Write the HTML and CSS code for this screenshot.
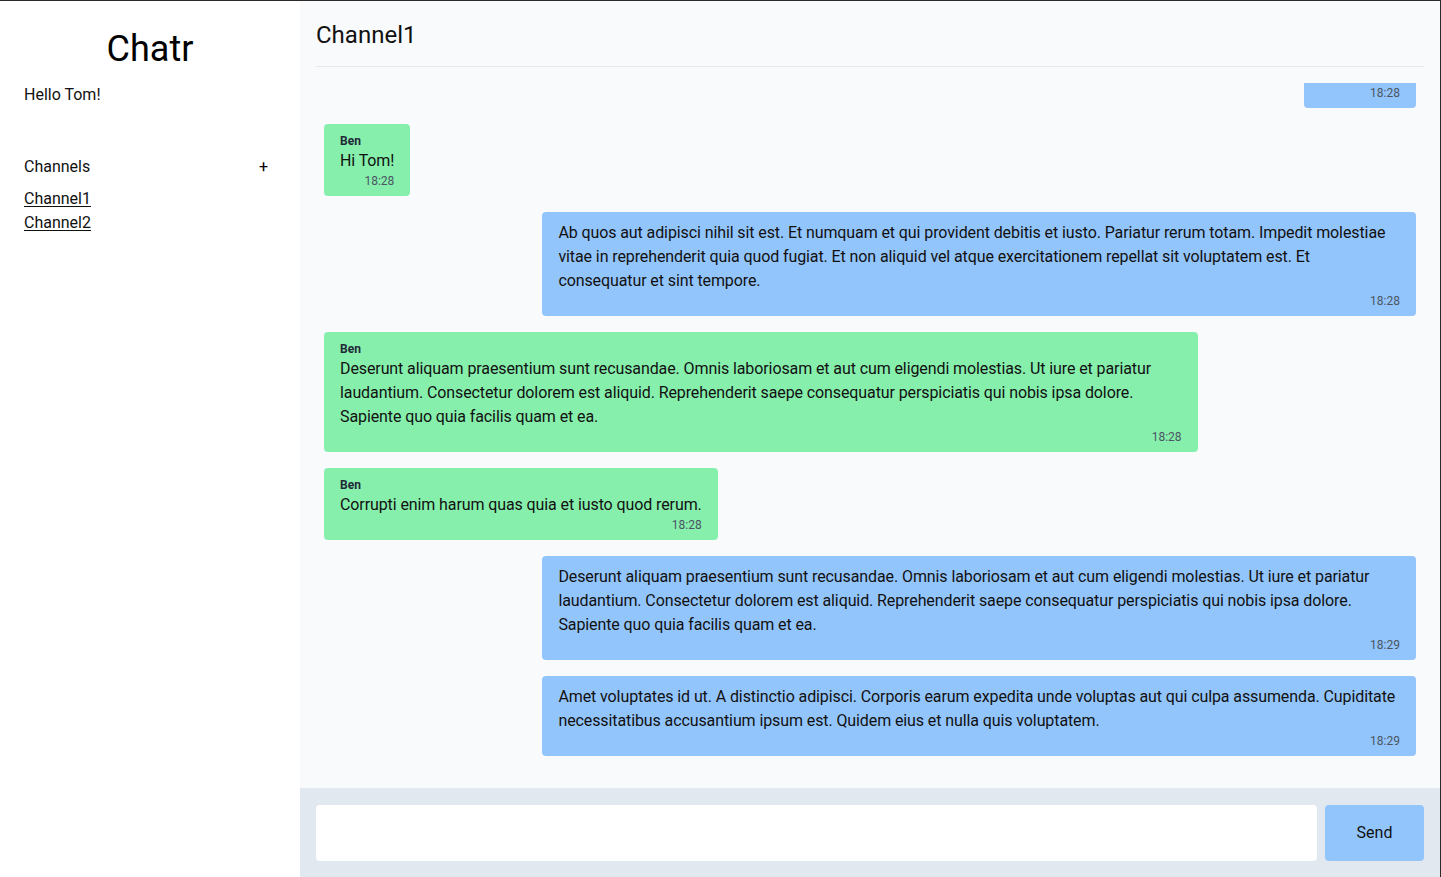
FILE: index.html
```html
<!DOCTYPE html>
<html lang="en">
<head>
<meta charset="utf-8">
<title>Chatr</title>
<link rel="stylesheet" href="styles.css">
</head>
<body>
<div class="app">
  <aside class="sidebar">
    <h1 class="brand">Chatr</h1>
    <p class="greeting">Hello Tom!</p>
    <div class="channels-head">
      <span>Channels</span>
      <button class="add-btn" type="button">+</button>
    </div>
    <nav class="channel-list">
      <a href="#" class="channel-link">Channel1</a>
      <a href="#" class="channel-link">Channel2</a>
    </nav>
  </aside>
  <main class="chat">
    <header class="chat-head">Channel1</header>
    <section class="messages">
      <div class="msg mine">
        <div class="msg-text">Hello there!</div>
        <div class="msg-time">18:28</div>
      </div>
      <div class="msg theirs">
        <div class="msg-sender">Ben</div>
        <div class="msg-text">Hi Tom!</div>
        <div class="msg-time">18:28</div>
      </div>
      <div class="msg mine">
        <div class="msg-text">Ab quos aut adipisci nihil sit est. Et numquam et qui provident debitis et iusto. Pariatur rerum totam. Impedit molestiae vitae in reprehenderit quia quod fugiat. Et non aliquid vel atque exercitationem repellat sit voluptatem est. Et consequatur et sint tempore.</div>
        <div class="msg-time">18:28</div>
      </div>
      <div class="msg theirs">
        <div class="msg-sender">Ben</div>
        <div class="msg-text">Deserunt aliquam praesentium sunt recusandae. Omnis laboriosam et aut cum eligendi molestias. Ut iure et pariatur laudantium. Consectetur dolorem est aliquid. Reprehenderit saepe consequatur perspiciatis qui nobis ipsa dolore. Sapiente quo quia facilis quam et ea.</div>
        <div class="msg-time">18:28</div>
      </div>
      <div class="msg theirs">
        <div class="msg-sender">Ben</div>
        <div class="msg-text">Corrupti enim harum quas quia et iusto quod rerum.</div>
        <div class="msg-time">18:28</div>
      </div>
      <div class="msg mine">
        <div class="msg-text">Deserunt aliquam praesentium sunt recusandae. Omnis laboriosam et aut cum eligendi molestias. Ut iure et pariatur laudantium. Consectetur dolorem est aliquid. Reprehenderit saepe consequatur perspiciatis qui nobis ipsa dolore. Sapiente quo quia facilis quam et ea.</div>
        <div class="msg-time">18:29</div>
      </div>
      <div class="msg mine">
        <div class="msg-text">Amet voluptates id ut. A distinctio adipisci. Corporis earum expedita unde voluptas aut qui culpa assumenda. Cupiditate necessitatibus accusantium ipsum est. Quidem eius et nulla quis voluptatem.</div>
        <div class="msg-time">18:29</div>
      </div>
    </section>
    <form class="composer">
      <input class="composer-input" type="text" aria-label="Message">
      <button class="send-btn" type="button">Send</button>
    </form>
  </main>
</div>
</body>
</html>
```
FILE: styles.css
```css
* { box-sizing: border-box; }

html, body {
  margin: 0;
  height: 100%;
}

body {
  font-family: Roboto, "Liberation Sans", sans-serif;
  font-size: 16px;
  line-height: 24px;
  color: #111111;
  background: #ffffff;
  border-top: 1px solid #2a2a2a;
  border-right: 1px solid #2a2a2a;
  overflow: hidden;
}

.app {
  display: flex;
  height: 100%;
}

/* Sidebar */
.sidebar {
  width: 300px;
  flex-shrink: 0;
  background: #ffffff;
  padding: 28px 24px;
  display: flex;
  flex-direction: column;
}

.brand {
  margin: 0;
  font-size: 36px;
  line-height: 40px;
  font-weight: 400;
  text-align: center;
  color: #000000;
}

.greeting {
  margin: 14px 0 0;
}

.channels-head {
  margin-top: 48px;
  display: flex;
  justify-content: space-between;
  align-items: center;
}

.add-btn {
  font: inherit;
  line-height: 24px;
  background: none;
  border: none;
  padding: 0 8px;
  color: #000000;
  cursor: pointer;
}

.channel-list {
  margin-top: 8px;
  display: flex;
  flex-direction: column;
  align-items: flex-start;
}

.channel-link {
  color: #111111;
  text-decoration: underline;
  text-underline-offset: 2px;
}

/* Chat */
.chat {
  flex: 1;
  min-width: 0;
  background: #f9fafb;
  display: flex;
  flex-direction: column;
}

.chat-head {
  margin: 0 16px;
  padding: 18px 0 15px;
  font-size: 24px;
  line-height: 32px;
  border-bottom: 1px solid #e5e7eb;
}

.messages {
  flex: 1;
  min-height: 0;
  overflow: hidden;
  margin-top: 16px;
  padding: 0 24px 32px;
  display: flex;
  flex-direction: column;
  justify-content: flex-end;
  gap: 16px;
}

.msg {
  max-width: 80%;
  padding: 9px 16px 7px;
  border-radius: 4px;
  flex-shrink: 0;
}

.msg.mine {
  align-self: flex-end;
  background: #93c5fd;
}

.msg.theirs {
  align-self: flex-start;
  background: #86efac;
}

.msg-sender {
  font-size: 12px;
  line-height: 16px;
  font-weight: 700;
  color: #1f2937;
}

.msg-text {
  letter-spacing: -0.1px;
}

.msg-time {
  font-size: 12px;
  line-height: 16px;
  text-align: right;
  color: #4b5563;
}

/* Composer */
.composer {
  margin: 0;
  padding: 17px 16px 16px;
  background: #e2e8f0;
  display: flex;
  gap: 8px;
}

.composer-input {
  flex: 1;
  height: 56px;
  border: none;
  border-radius: 4px;
  background: #ffffff;
  padding: 0 16px;
  font: inherit;
}

.send-btn {
  width: 99px;
  height: 56px;
  border: none;
  border-radius: 4px;
  background: #93c5fd;
  font: inherit;
  color: #111111;
}
```
